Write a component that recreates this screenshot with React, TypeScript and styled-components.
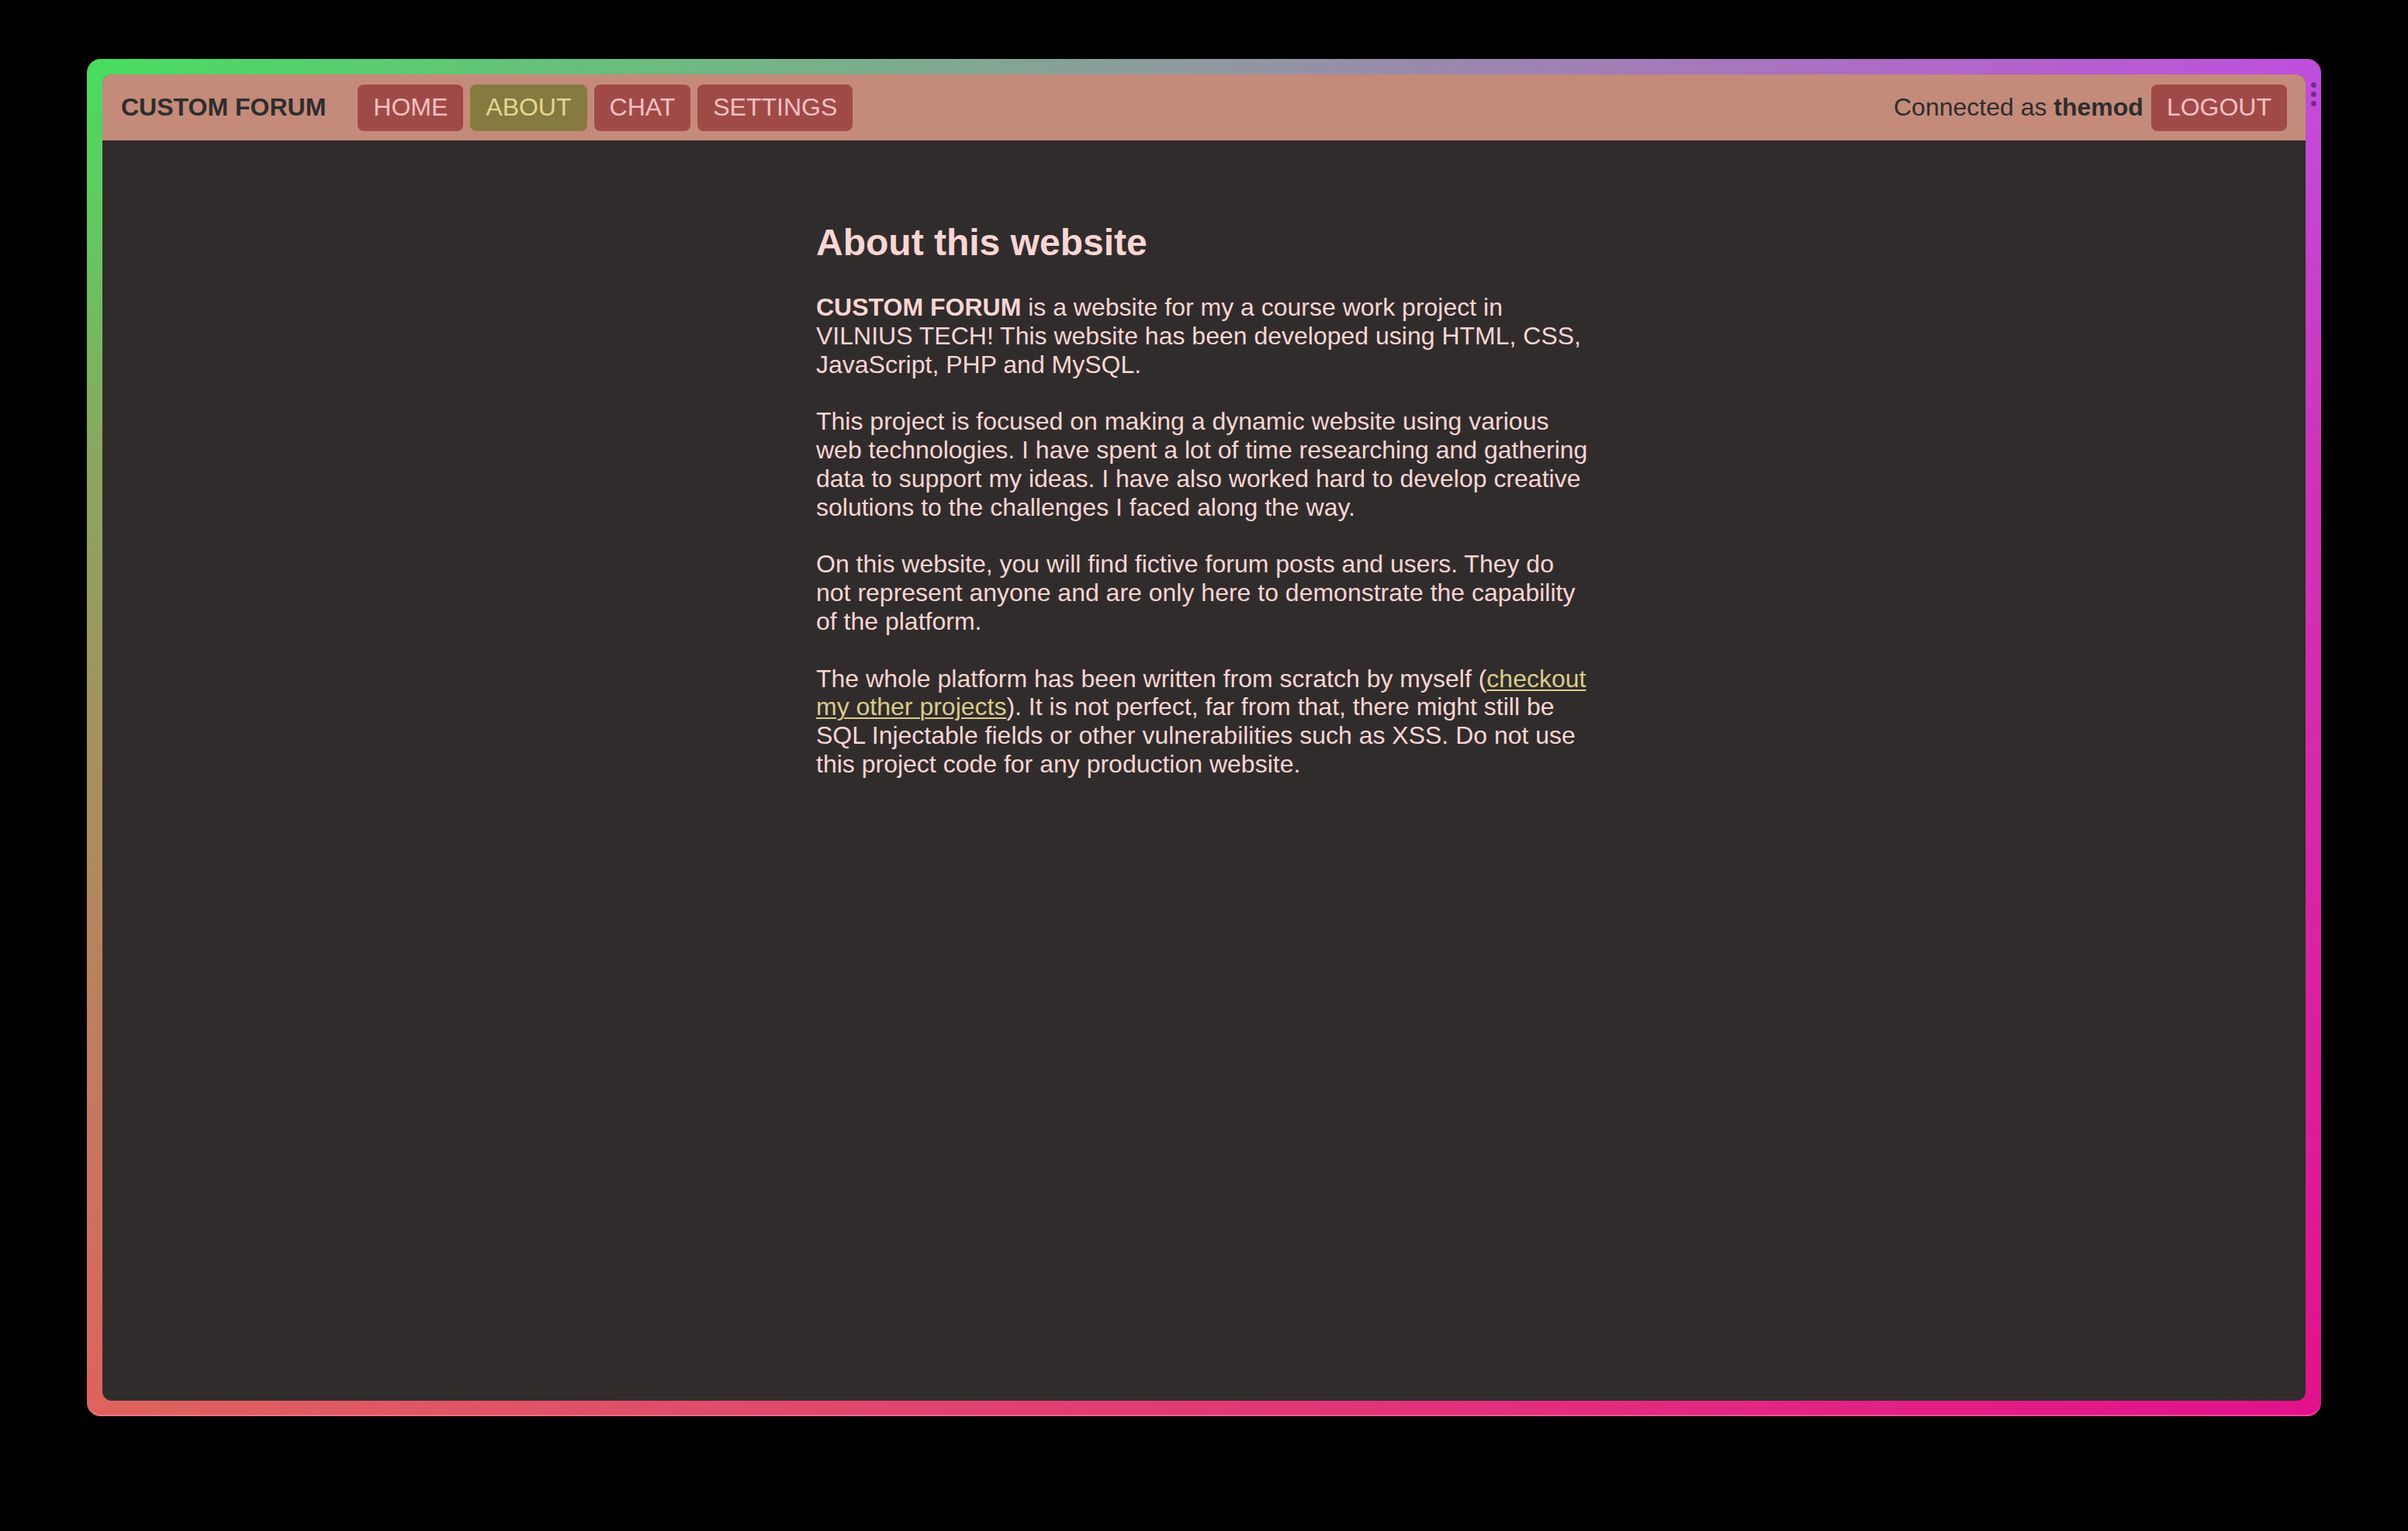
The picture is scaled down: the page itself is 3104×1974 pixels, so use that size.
import React from "react";
import styled, { createGlobalStyle } from "styled-components";

const GlobalStyle = createGlobalStyle`
  html, body {
    margin: 0;
    padding: 0;
    background: #000;
  }
  body {
    font-family: "Liberation Sans", Helvetica, Arial, sans-serif;
  }
  * { box-sizing: border-box; }
`;

const Page = styled.div`
  width: 3104px;
  height: 1974px;
  padding: 76px 112px 148px;
  background: #000;
`;

const Frame = styled.div`
  position: relative;
  height: 100%;
  padding: 20px;
  border-radius: 18px;
  background: linear-gradient(to right, #e0625e, #e2128c);
  box-shadow: inset 0 -2px 0 rgba(255, 140, 170, 0.45);

  &::before {
    content: "";
    position: absolute;
    inset: 0;
    border-radius: 18px;
    background: linear-gradient(to right, #46de60, #8f9aa0 50%, #bf4fde);
    -webkit-mask-image: linear-gradient(to bottom, #000 0%, rgba(0,0,0,0.55) 30%, transparent 100%);
    mask-image: linear-gradient(to bottom, #000 0%, rgba(0,0,0,0.55) 30%, transparent 100%);
  }
`;

const Handle = styled.div`
  position: absolute;
  right: 6px;
  top: 30px;
  z-index: 2;
  display: flex;
  flex-direction: column;
  gap: 5px;
`;

const HandleDot = styled.span`
  width: 7px;
  height: 7px;
  border-radius: 50%;
  background: #7a2a8e;
`;

const Window = styled.div`
  position: relative;
  z-index: 1;
  height: 100%;
  display: flex;
  flex-direction: column;
  background: #312c2c;
  border-radius: 12px;
  overflow: hidden;
`;

const NavBar = styled.nav`
  height: 85px;
  flex: none;
  display: flex;
  align-items: center;
  padding: 0 24px;
  background: #c48a7a;
`;

const Brand = styled.div`
  font-size: 32px;
  font-weight: 700;
  color: #2f2d2d;
  margin-right: 41px;
  white-space: nowrap;
`;

const NavGroup = styled.div`
  display: flex;
  align-items: center;
  gap: 9px;
`;

const NavButton = styled.a<{ $active?: boolean }>`
  height: 60px;
  display: flex;
  align-items: center;
  padding: 0 20px;
  border-radius: 8px;
  font-size: 32px;
  text-decoration: none;
  cursor: pointer;
  background: ${(p) => (p.$active ? "#857a40" : "#a04a48")};
  color: ${(p) => (p.$active ? "#e3d78f" : "#f2c1c1")};
`;

const UserArea = styled.div`
  margin-left: auto;
  display: flex;
  align-items: center;
  gap: 10px;
`;

const Connected = styled.span`
  font-size: 32px;
  color: #2f2d2d;
  white-space: nowrap;

  b {
    font-weight: 700;
  }
`;

const Main = styled.main`
  flex: 1;
  padding-top: 104px;
`;

const Article = styled.article`
  width: 1000px;
  margin: 0 auto;
  color: #f8d6d4;
`;

const Title = styled.h2`
  margin: 0 0 38px;
  font-size: 48px;
  line-height: 1.15;
  font-weight: 700;
`;

const Paragraph = styled.p`
  margin: 0 0 36.8px;
  font-size: 32px;
  line-height: 36.8px;
  white-space: nowrap;

  b {
    font-weight: 700;
  }
`;

const Link = styled.a`
  color: #d8cc8a;
  text-decoration: underline;
  text-underline-offset: 3px;
  text-decoration-thickness: 2px;
`;

export default function App() {
  return (
    <>
      <GlobalStyle />
      <Page>
        <Frame>
          <Handle>
            <HandleDot />
            <HandleDot />
            <HandleDot />
          </Handle>
          <Window>
            <NavBar>
              <Brand>CUSTOM FORUM</Brand>
              <NavGroup>
                <NavButton>HOME</NavButton>
                <NavButton $active>ABOUT</NavButton>
                <NavButton>CHAT</NavButton>
                <NavButton>SETTINGS</NavButton>
              </NavGroup>
              <UserArea>
                <Connected>
                  Connected as <b>themod</b>
                </Connected>
                <NavButton>LOGOUT</NavButton>
              </UserArea>
            </NavBar>
            <Main>
              <Article>
                <Title>About this website</Title>
                <Paragraph>
                  <b>CUSTOM FORUM</b> is a website for my a course work project in
                  <br />
                  VILNIUS TECH! This website has been developed using HTML, CSS,
                  <br />
                  JavaScript, PHP and MySQL.
                </Paragraph>
                <Paragraph>
                  This project is focused on making a dynamic website using various
                  <br />
                  web technologies. I have spent a lot of time researching and gathering
                  <br />
                  data to support my ideas. I have also worked hard to develop creative
                  <br />
                  solutions to the challenges I faced along the way.
                </Paragraph>
                <Paragraph>
                  On this website, you will find fictive forum posts and users. They do
                  <br />
                  not represent anyone and are only here to demonstrate the capability
                  <br />
                  of the platform.
                </Paragraph>
                <Paragraph>
                  The whole platform has been written from scratch by myself (
                  <Link>checkout</Link>
                  <br />
                  <Link>my other projects</Link>). It is not perfect, far from that, there might still be
                  <br />
                  SQL Injectable fields or other vulnerabilities such as XSS. Do not use
                  <br />
                  this project code for any production website.
                </Paragraph>
              </Article>
            </Main>
          </Window>
        </Frame>
      </Page>
    </>
  );
}
